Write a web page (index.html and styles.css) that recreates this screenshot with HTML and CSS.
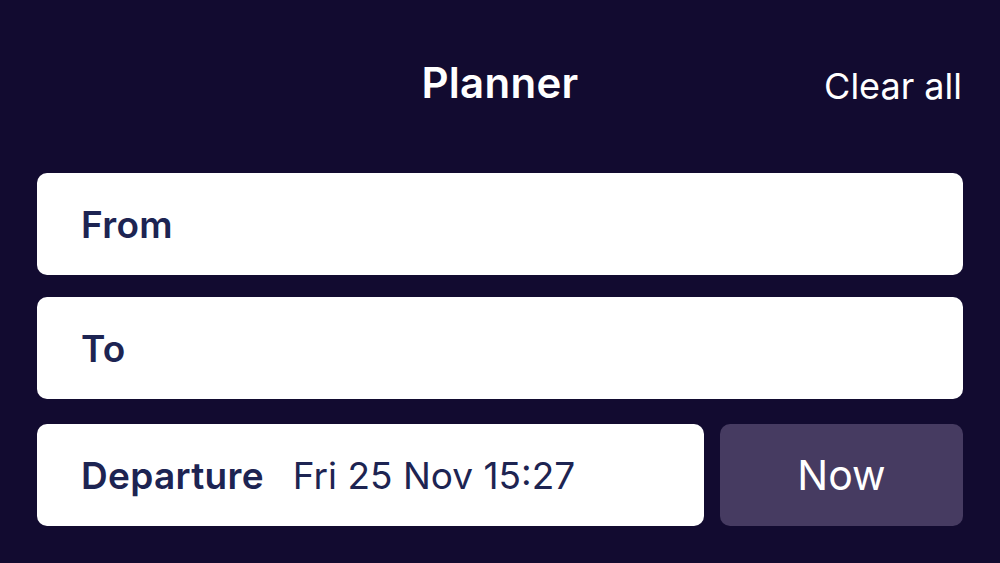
FILE: index.html
```html
<!DOCTYPE html>
<html>
<head>
<meta charset="utf-8">
<link rel="stylesheet" href="styles.css">
</head>
<body>
<div class="app">
  <header class="topbar">
    <div class="spacer"></div>
    <h1 class="title">Planner</h1>
    <div class="actions"><span class="clear">Clear all</span></div>
  </header>
  <div class="fields">
    <div class="field"><span class="label">From</span></div>
    <div class="field"><span class="label">To</span></div>
    <div class="row">
      <div class="field grow"><span class="label">Departure</span><span class="value">Fri 25 Nov 15:27</span></div>
      <div class="now">Now</div>
    </div>
  </div>
</div>
</body>
</html>
```
FILE: styles.css
```css
html, body {
  margin: 0;
  padding: 0;
  background: #120b30;
  height: 100%;
}
body {
  font-family: Inter, "Noto Sans", "Liberation Sans", sans-serif;
  -webkit-font-smoothing: antialiased;
}
.app {
  padding: 0 37px;
}
.topbar {
  display: grid;
  grid-template-columns: 1fr auto 1fr;
  align-items: center;
  height: 173px;
  box-sizing: border-box;
  padding-bottom: 9px;
}
.title {
  margin: 0;
  color: #ffffff;
  font-size: 42px;
  font-weight: 600;
  text-align: center;
  letter-spacing: 0.3px;
}
.actions {
  display: flex;
  justify-content: flex-end;
  padding-top: 8px;
  padding-right: 1px;
}
.clear {
  color: #ffffff;
  font-size: 36px;
  font-weight: 400;
}
.fields {
  display: flex;
  flex-direction: column;
  gap: 22px;
}
.field {
  background: #ffffff;
  border-radius: 10px;
  height: 102px;
  display: flex;
  align-items: center;
  padding: 0 44px;
  box-sizing: border-box;
  color: #1d2452;
}
.label {
  font-size: 37px;
  font-weight: 600;
  letter-spacing: 0.3px;
}
.value {
  font-size: 37px;
  font-weight: 400;
  margin-left: 29px;
}
.row {
  display: flex;
  gap: 16px;
  margin-top: 3px;
}
.grow {
  flex: 1;
}
.now {
  width: 243px;
  height: 102px;
  border-radius: 10px;
  background: #463b61;
  color: #ffffff;
  font-size: 41px;
  display: flex;
  align-items: center;
  justify-content: center;
}
```
